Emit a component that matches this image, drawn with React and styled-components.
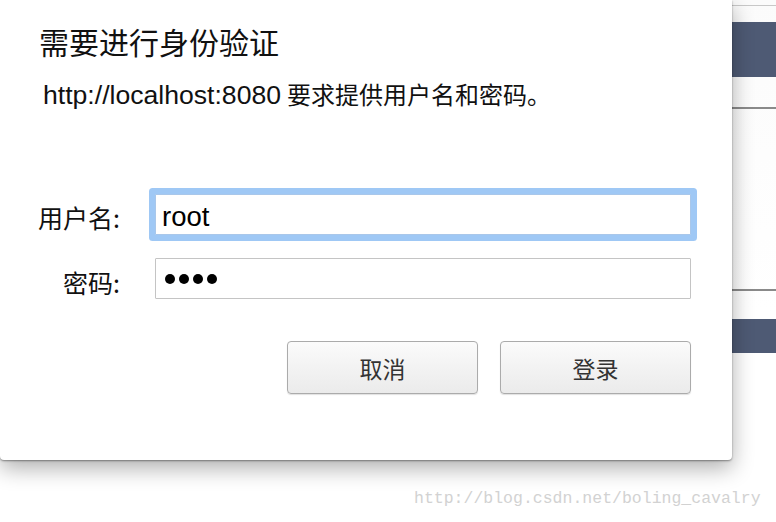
import React from 'react';
import styled, { createGlobalStyle } from 'styled-components';

const GlobalStyle = createGlobalStyle`
  html, body {
    margin: 0;
    padding: 0;
    background: #ffffff;
  }
  body {
    font-family: "Liberation Sans", "Noto Sans CJK SC", sans-serif;
  }
`;

const Page = styled.div`
  position: relative;
  width: 776px;
  height: 522px;
  overflow: hidden;
  background: #ffffff;
`;

// the web page behind the modal, only its right edge shows
const BackPage = styled.div`
  display: flex;
  flex-direction: column;
  height: 100%;
  background: linear-gradient(to bottom, #fbfbfb 0%, #ffffff 60%);
`;

const Rule = styled.div`
  height: ${(p) => p.$h || 1}px;
  margin-top: ${(p) => p.$top}px;
  background: ${(p) => p.$color};
`;

const Band = styled.div`
  height: ${(p) => p.$h}px;
  margin-top: ${(p) => p.$top}px;
  background: #4e5a74;
`;

const Dialog = styled.div`
  position: absolute;
  top: 0;
  left: 0;
  width: 732px;
  height: 460px;
  box-sizing: border-box;
  background: #ffffff;
  border-radius: 0 0 4px 4px;
  box-shadow: 0 8px 22px rgba(0, 0, 0, 0.32), 0 1px 2px rgba(0, 0, 0, 0.4);
  display: flex;
  flex-direction: column;
  color: #111;
`;

const Title = styled.h1`
  margin: 24px 0 0 39px;
  font-size: 30px;
  line-height: 34px;
  font-weight: 400;
  font-family: "Noto Sans CJK SC", "Liberation Sans", sans-serif;
`;

const Message = styled.p`
  margin: 21px 0 0 43px;
  font-size: 24px;
  line-height: 30px;
  font-family: "Noto Sans CJK SC", sans-serif;
`;

const Url = styled.span`
  font-family: "Liberation Sans", sans-serif;
  font-size: 26.6px;
  margin-right: 6px;
`;

const Form = styled.div`
  display: grid;
  grid-template-columns: 120px 536px;
  column-gap: 35px;
  row-gap: 23px;
  align-items: center;
  margin-top: 84px;
`;

const Label = styled.label`
  text-align: right;
  font-size: 25px;
  font-family: "Noto Sans CJK SC", sans-serif;
  line-height: 41px;
  transform: translateY(${(p) => p.$shift || 0}px);
`;

const Field = styled.div`
  box-sizing: border-box;
  height: 41px;
  display: flex;
  align-items: center;
  padding: ${(p) => (p.$focused ? '4px 0 0 6px' : '0 0 0 6px')};
  background: #ffffff;
  border: 1px solid ${(p) => (p.$focused ? '#a9c7ea' : '#c4c4c4')};
  border-radius: 1px;
  box-shadow: ${(p) => (p.$focused ? '0 0 0 6px #9fc8f5' : 'none')};
  font-family: "Liberation Sans", sans-serif;
  font-size: 27.5px;
  color: #000;
`;

const Dots = styled.div`
  display: flex;
  gap: 4px;
  padding-left: 3px;
`;

const Dot = styled.span`
  width: 10px;
  height: 10px;
  border-radius: 50%;
  background: #000;
`;

const Actions = styled.div`
  display: flex;
  justify-content: flex-end;
  gap: 22px;
  margin: 42px 41px 0 0;
`;

const Button = styled.button`
  width: 191px;
  height: 53px;
  box-sizing: border-box;
  border: 1px solid #ababab;
  border-radius: 4px;
  background: linear-gradient(to bottom, #fbfbfb 0%, #f1f1f1 60%, #ebebeb 100%);
  box-shadow: 0 1px 1px rgba(0, 0, 0, 0.12);
  font-family: "Noto Sans CJK SC", sans-serif;
  font-size: 23px;
  color: #333;
  padding: 0;
`;

const Watermark = styled.div`
  position: absolute;
  left: 414px;
  top: 489px;
  font-family: "Liberation Mono", monospace;
  font-size: 16.5px;
  color: #d2d2d2;
`;

export default function App() {
  return (
    <Page>
      <GlobalStyle />
      <BackPage>
        <Rule $top={5} $color="#c8c8c8" />
        <Band $top={16} $h={55} />
        <Rule $top={30} $h={2} $color="#8a8a8a" />
        <Rule $top={180} $h={2} $color="#8a8a8a" />
        <Band $top={28} $h={34} />
      </BackPage>

      <Dialog>
        <Title>需要进行身份验证</Title>
        <Message>
          <Url>http://localhost:8080</Url>要求提供用户名和密码。
        </Message>

        <Form>
          <Label $shift={3}>用户名:</Label>
          <Field $focused>root</Field>
          <Label $shift={4}>密码:</Label>
          <Field>
            <Dots>
              <Dot />
              <Dot />
              <Dot />
              <Dot />
            </Dots>
          </Field>
        </Form>

        <Actions>
          <Button>取消</Button>
          <Button>登录</Button>
        </Actions>
      </Dialog>

      <Watermark>http://blog.csdn.net/boling_cavalry</Watermark>
    </Page>
  );
}
